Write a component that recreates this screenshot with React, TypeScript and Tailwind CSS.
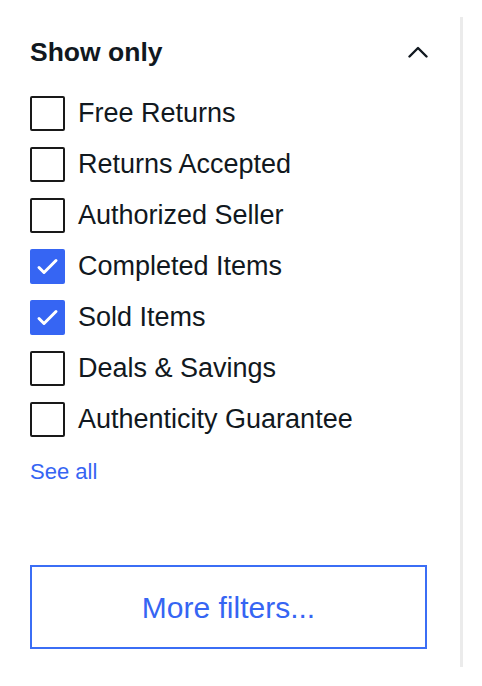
import { useState } from 'react';

const options = [
  { label: 'Free Returns', checked: false },
  { label: 'Returns Accepted', checked: false },
  { label: 'Authorized Seller', checked: false },
  { label: 'Completed Items', checked: true },
  { label: 'Sold Items', checked: true },
  { label: 'Deals & Savings', checked: false },
  { label: 'Authenticity Guarantee', checked: false },
];

function Checkbox({ checked }: { checked: boolean }) {
  if (checked) {
    return (
      <span className="flex h-[35px] w-[35px] shrink-0 items-center justify-center rounded-[2px] bg-[#3665f3]">
        <svg width="35" height="35" viewBox="0 0 35 35" fill="none">
          <path d="M9 18.5l5 5L26 11.5" stroke="#fff" strokeWidth="3" strokeLinecap="round" strokeLinejoin="round" />
        </svg>
      </span>
    );
  }
  return <span className="h-[35px] w-[35px] shrink-0 rounded-[2px] border-2 border-[#191919]" />;
}

export default function App() {
  const [items, setItems] = useState(options);

  const toggle = (i: number) => {
    setItems((prev) => prev.map((it, idx) => (idx === i ? { ...it, checked: !it.checked } : it)));
  };

  return (
    <div className="min-h-[686px] bg-white pt-[17px] font-['Liberation_Sans',Arial,sans-serif] text-[#111820]">
      <div className="flex h-[650px] w-[463px] flex-col border-r-[3px] border-[#ebebeb] pl-[30px] pr-[33px] pt-[15px]">
        <div className="flex h-10 items-center justify-between">
          <h3 className="text-[26.5px] font-bold leading-none">Show only</h3>
          <svg width="20" height="12" viewBox="0 0 20 12" fill="none" className="-mr-[1px]">
            <path d="M1.5 10.5L10 2l8.5 8.5" stroke="#111820" strokeWidth="2.4" strokeLinecap="round" strokeLinejoin="round" />
          </svg>
        </div>
        <ul className="mt-[16px] flex flex-col">
          {items.map((it, i) => (
            <li key={it.label} className="flex h-[51px] cursor-pointer items-center gap-[13px]" onClick={() => toggle(i)}>
              <Checkbox checked={it.checked} />
              <span className="text-[27px] leading-none">{it.label}</span>
            </li>
          ))}
        </ul>
        <a className="mt-[13px] text-[22px] leading-[28px] text-[#3665f3]">See all</a>
        <button className="mt-[79px] flex h-[84px] w-full items-center justify-center border-2 border-[#3b6ef5] text-[30px] font-medium text-[#3665f3]">
          More filters...
        </button>
      </div>
    </div>
  );
}
